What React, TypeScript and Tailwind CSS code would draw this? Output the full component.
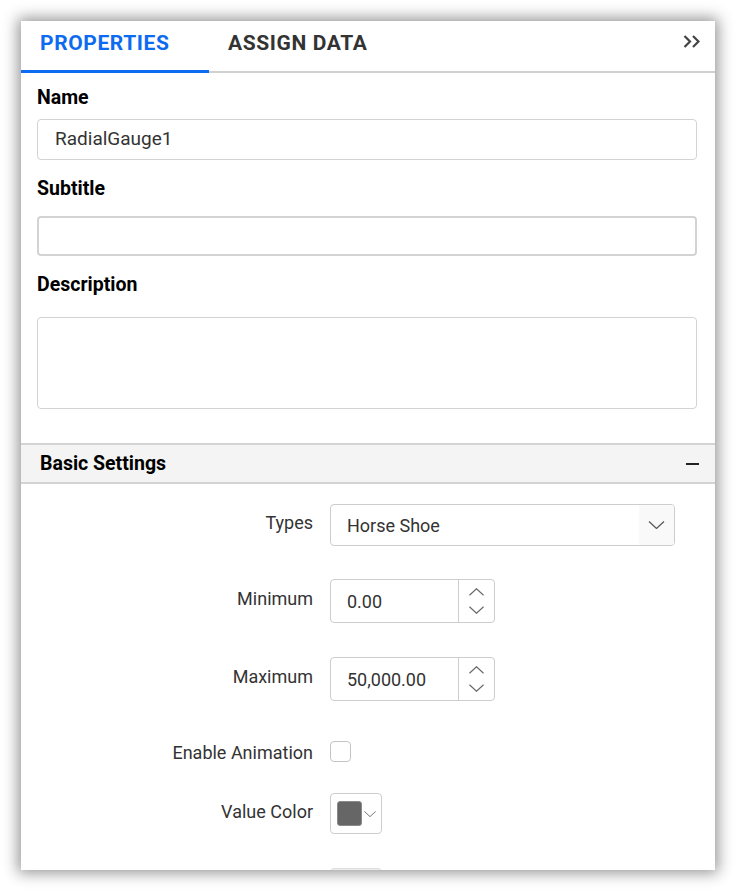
import { useState } from 'react'

const ROW_LABEL = 'relative -top-[2px] w-[309px] shrink-0 pr-[17px] text-right text-[18px] leading-6 text-[#333]'

function Chevron({ dir = 'down', className = '' }: { dir?: 'down' | 'up'; className?: string }) {
  return (
    <svg viewBox="0 0 16 8" className={className} fill="none" stroke="currentColor" strokeWidth="1.2">
      {dir === 'down' ? <path d="M0.5 0.5 L8 7.5 L15.5 0.5" /> : <path d="M0.5 7.5 L8 0.5 L15.5 7.5" />}
    </svg>
  )
}

function NumberBox({ value }: { value: string }) {
  return (
    <div className="flex h-[44px] w-[165px] rounded-[4px] border-[1.5px] border-[#cdcdcd] bg-white">
      <div className="flex flex-1 items-center pl-[16px] text-[18px] text-[#333]">{value}</div>
      <div className="flex w-[36px] flex-col items-center justify-center gap-[10px] border-l-[1.5px] border-[#cdcdcd] text-[#666]">
        <Chevron dir="up" className="h-[8px] w-[15px]" />
        <Chevron dir="down" className="h-[8px] w-[15px]" />
      </div>
    </div>
  )
}

export default function App() {
  const [tab, setTab] = useState(0)
  const [animate, setAnimate] = useState(false)

  return (
    <div className="h-[890px] bg-white p-[21px]" style={{ fontFamily: 'Roboto, "Noto Sans", sans-serif' }}>
      <div className="h-[849px] w-[694px] overflow-hidden bg-white shadow-[0_0_14px_3px_rgba(0,0,0,0.42)]">
        {/* tabs */}
        <div className="flex h-[52px] items-start border-b-2 border-[#d0d0d0]">
          {['PROPERTIES', 'ASSIGN DATA'].map((t, i) => (
            <button
              key={t}
              onClick={() => setTab(i)}
              className={
                'flex h-[52px] items-center border-b-[3px] pl-[19px] pb-[4px] text-[21px] font-bold tracking-[0.6px] ' +
                (tab === i ? 'border-[#0d6bf0] text-[#0d6bf0] ' : 'border-transparent text-[#333] ') +
                (i === 0 ? 'w-[188px]' : '')
              }
            >
              {t}
            </button>
          ))}
          <div className="ml-auto mr-[15px] mt-[14px] text-[#444]">
            <svg viewBox="0 0 17 13" className="h-[13px] w-[17px]" fill="none" stroke="currentColor" strokeWidth="2.2">
              <path d="M1.5 1 L7 6.5 L1.5 12" />
              <path d="M10 1 L15.5 6.5 L10 12" />
            </svg>
          </div>
        </div>

        {/* general fields */}
        <div className="pl-[16px] pr-[18px]">
          <div className="mt-[13px] text-[19.5px] font-bold leading-6 text-black">Name</div>
          <div className="mt-[9px] flex h-[41px] items-center rounded-[4px] border border-[#d3d3d3] pl-[17px] text-[19px] text-[#333]">
            RadialGauge1
          </div>
          <div className="mt-[17px] text-[19.5px] font-bold leading-6 text-black">Subtitle</div>
          <div className="mt-[15px] h-[40px] rounded-[4px] border-2 border-[#d3d3d3]" />
          <div className="mt-[17px] text-[19.5px] font-bold leading-6 text-black">Description</div>
          <div className="mt-[20px] h-[92px] rounded-[4px] border border-[#d3d3d3]" />
        </div>

        {/* basic settings */}
        <div className="mt-[34px] flex h-[41px] items-center border-y-2 border-[#d3d3d3] bg-[#f4f4f4] pl-[19px] pr-[16px]">
          <span className="text-[19.5px] font-bold text-black">Basic Settings</span>
          <span className="ml-auto block h-[2px] w-[13px] bg-[#222]" />
        </div>

        <div className="mt-[20px] flex items-center">
          <div className={ROW_LABEL}>Types</div>
          <div className="flex h-[42px] w-[345px] overflow-hidden rounded-[4px] border-[1.5px] border-[#cdcdcd]">
            <div className="flex flex-1 items-center pl-[16px] text-[18px] text-[#333]">Horse Shoe</div>
            <div className="flex w-[35px] items-center justify-center bg-[#f9f9f9] text-[#555]">
              <Chevron className="h-[8px] w-[17px]" />
            </div>
          </div>
        </div>

        <div className="mt-[33px] flex items-center">
          <div className={ROW_LABEL}>Minimum</div>
          <NumberBox value="0.00" />
        </div>

        <div className="mt-[34px] flex items-center">
          <div className={ROW_LABEL}>Maximum</div>
          <NumberBox value="50,000.00" />
        </div>

        <div className="mt-[38px] flex h-[24px] items-center">
          <div className="relative top-[2px] w-[309px] shrink-0 pr-[17px] text-right text-[18px] leading-6 text-[#333]">
            Enable Animation
          </div>
          <button
            onClick={() => setAnimate(!animate)}
            className="h-[21px] w-[21px] rounded-[4px] border-[1.5px] border-[#c4c4c4] bg-white"
          >
            {animate && (
              <svg viewBox="0 0 16 16" className="h-full w-full" fill="none" stroke="#0d6bf0" strokeWidth="2">
                <path d="M3 8 L7 12 L13 4" />
              </svg>
            )}
          </button>
        </div>

        <div className="mt-[30px] flex items-center">
          <div className={ROW_LABEL}>Value Color</div>
          <div className="flex h-[41px] w-[52px] items-center rounded-[4px] border-[1.5px] border-[#cdcdcd] pl-[6px]">
            <span className="block h-[25px] w-[25px] rounded-[3px] border border-[#8a8a8a] bg-[#666]" />
            <Chevron className="ml-[2px] h-[6px] w-[12px] text-[#666]" />
          </div>
        </div>

        <div className="mt-[34px] flex items-center">
          <div className="w-[309px] shrink-0" />
          <div className="h-[41px] w-[52px] rounded-[4px] border-[1.5px] border-[#dcdcdc] bg-[#eeeeee]" />
        </div>
      </div>
    </div>
  )
}
